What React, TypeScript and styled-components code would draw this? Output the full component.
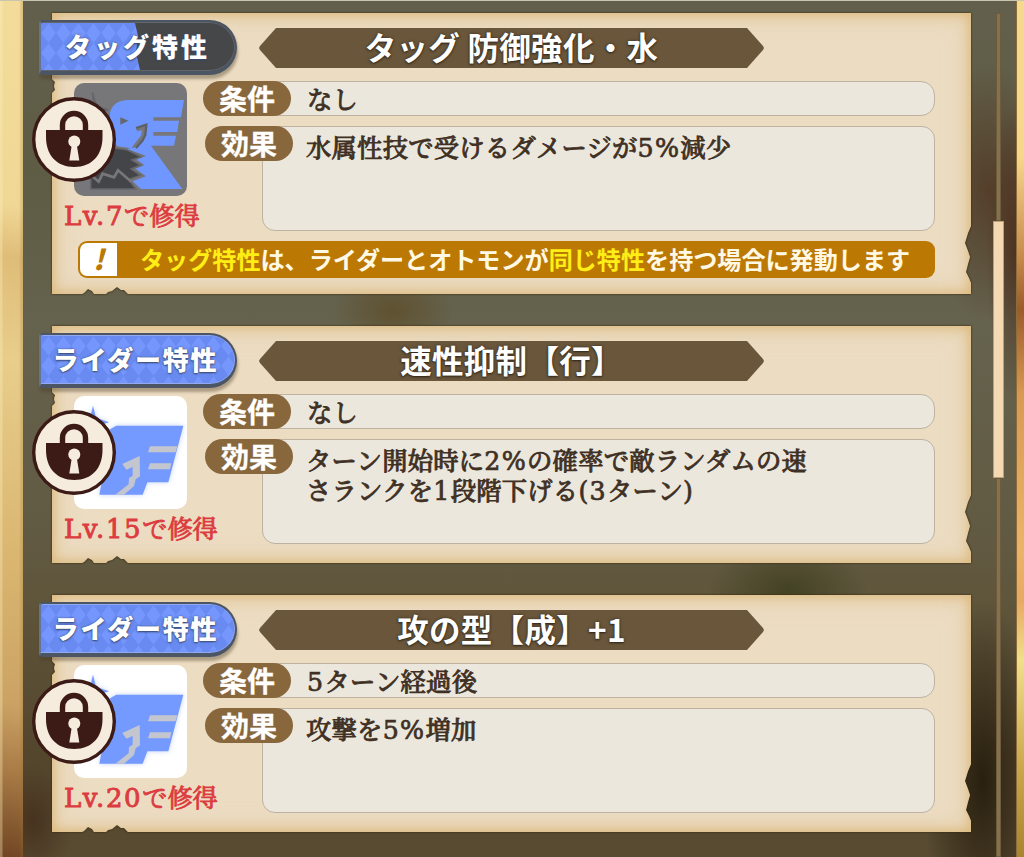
import type React from "react"
import styled, { createGlobalStyle } from "styled-components"

const gothic = `"Noto Sans CJK JP", "Noto Sans", sans-serif`
const mincho = `"Liberation Serif", "Noto Serif CJK JP", "Noto Sans CJK JP", serif`
const slab = `"DejaVu Serif", "Liberation Serif", serif`

const GlobalStyle = createGlobalStyle`
  * {
    box-sizing: border-box;
  }
  body {
    margin: 0;
    overflow: hidden;
    background: #5f553d;
  }
`

const Screen = styled.div`
  display: grid;
  grid-template-columns: 23px 1fr 8px;
  width: 1024px;
  height: 857px;
  overflow: hidden;
  border-top: 1px solid #c9c6b0;
`

const LeftFrame = styled.div`
  background:
    linear-gradient(90deg, rgba(255, 240, 190, 0.35) 0 2px, transparent 3px 19px, rgba(150, 110, 50, 0.25) 22px),
    linear-gradient(190deg, #f3dc9b 0%, #f0d795 24%, #dfbd78 30%, #e8cd8b 42%, #d9b56f 66%, #cba264 82%, #a87a46 90%, #704522 100%);
`

const RightFrame = styled.div`
  border-left: 1px solid #8b6c3a;
  background: linear-gradient(180deg, #f5d98d 0%, #f7d88b 18%, #c68a4a 30%, #9c5b2b 36%, #d89a52 46%, #eab468 64%, #e8a962 70%, #efe08a 77%, #c9a54a 90%, #a8842f 100%);
`

const Panel = styled.main`
  display: flex;
  padding: 12px 12px 0 29px;
  background:
    radial-gradient(ellipse 60px 130px at 965px 190px, rgba(75, 38, 20, 0.55), transparent),
    radial-gradient(ellipse 30px 150px at 993px 250px, rgba(65, 25, 12, 0.6), transparent),
    radial-gradient(ellipse 80px 50px at 765px 590px, rgba(52, 55, 22, 0.65), transparent),
    radial-gradient(ellipse 60px 180px at 960px 780px, rgba(30, 22, 8, 0.8), transparent),
    radial-gradient(ellipse 60px 40px at 370px 310px, rgba(90, 65, 20, 0.5), transparent),
    radial-gradient(ellipse 40px 60px at 10px 820px, rgba(60, 35, 18, 0.6), transparent),
    linear-gradient(180deg, #62604c 0%, #5f5c45 20%, #65624d 38%, #625b44 60%, #5f563c 69%, #54462d 88%, #594b32 100%);
`

const List = styled.div`
  display: flex;
  flex-direction: column;
  gap: 32px;
  width: 919px;
`

const CardBox = styled.section<{ $height: number }>`
  position: relative;
  height: ${(props) => props.$height}px;
  padding: 7px 0 0;
`

const PaperShade = styled.div`
  position: absolute;
  inset: 0;
  filter: drop-shadow(0 0 0.7px #35250d) drop-shadow(0 0 1px #35250d);
`

/* torn edges are measured from the bottom so they hold for both card heights */
const Paper = styled.div`
  height: 100%;
  background: #ecdcc2;
  box-shadow: inset 0 0 12px 2px rgba(214, 170, 95, 0.65), inset 0 0 28px rgba(222, 184, 125, 0.35);
  clip-path: polygon(
    0 0, 100% 0, 100% calc(100% - 68px),
    calc(100% - 3px) calc(100% - 61px), calc(100% - 6px) calc(100% - 51px),
    calc(100% - 3px) calc(100% - 43px), calc(100% - 1px) calc(100% - 37px),
    calc(100% - 3px) calc(100% - 30px), calc(100% - 5px) calc(100% - 22px),
    calc(100% - 2px) calc(100% - 16px), 100% calc(100% - 11px), 100% 100%,
    76px 100%, 72px calc(100% - 4px), 69px calc(100% - 4px), 65px calc(100% - 7px),
    60px calc(100% - 3px), 56px calc(100% - 2px), 54px 100%,
    42px 100%, 40px calc(100% - 3px), 36px calc(100% - 5px), 32px calc(100% - 1px), 30px 100%,
    0 100%, 0 80px, 3px 77px, 2px 73px, 3px 69px, 0 66px
  );
`

const Header = styled.header`
  position: relative;
  display: flex;
  height: 61px;
  margin-left: -13px;
`

const Badge = styled.div<{ $tag?: boolean }>`
  position: relative;
  width: 198px;
  height: 55px;
  padding: 0 ${(props) => (props.$tag ? "1px" : "5px")} 2px 0;
  display: flex;
  align-items: center;
  justify-content: center;
  border: 2px solid #4c5563;
  border-bottom-width: 4px;
  border-left-color: #667493;
  border-radius: 4px 28px 28px 4px;
  background: ${(props) => (props.$tag ? "#464748" : "#7193fb")};
  box-shadow: inset 0 0 0 1px ${(props) => (props.$tag ? "#62666b" : "#91a9f1")}, 1px 4px 3px rgba(75, 60, 38, 0.4);
  overflow: hidden;
`

const Checker = styled.div<{ $tag?: boolean }>`
  position: absolute;
  inset: 1px 1px 1px 0;
  width: ${(props) => (props.$tag ? "99px" : "auto")};
  border-radius: 1px ${(props) => (props.$tag ? "0 0" : "25px 25px")} 1px;
  background-color: #7496fd;
  background-image:
    linear-gradient(53deg, #698bf1 25%, transparent 27% 73%, #698bf1 75%),
    linear-gradient(-53deg, #698bf1 25%, transparent 27% 73%, #698bf1 75%);
  background-size: 15px 20px;
  clip-path: ${(props) => (props.$tag ? "polygon(0 0, 94px 0, 97px 13px, 95px 30px, 99px 100%, 0 100%)" : "none")};
`

const BadgeText = styled.span<{ $tag?: boolean }>`
  position: relative;
  font: 900 26px/40px ${gothic};
  letter-spacing: ${(props) => (props.$tag ? 3 : 1.8)}px;
  color: #fff;
  white-space: nowrap;
  text-shadow: 0 1px 2px #36486f, 0 0 2px #45547c;
`

const Ribbon = styled.h2`
  width: 505px;
  height: 40px;
  margin: 8px 0 0 22px;
  background: #69563b;
  clip-path: polygon(17px 0, calc(100% - 17px) 0, calc(100% - 1px) 18px, 100% 50%, calc(100% - 1px) 22px, calc(100% - 17px) 100%, 17px 100%, 1px 22px, 0 50%, 1px 18px);
  font: 700 31.5px/36px ${gothic};
  letter-spacing: 0.3px;
  color: #fff;
  text-align: center;
  white-space: pre;
  text-shadow: 0 1px 2px #30271b, 0 0 3px #3d3120;
`

const Body = styled.div`
  position: relative;
  display: flex;
  height: 150px;
`

const Side = styled.div`
  width: 151px;
  padding: 2px 0 0 22px;
`

const Tile = styled.div<{ $tag?: boolean }>`
  position: relative;
  width: 113px;
  height: 113px;
  border-radius: 10px;
  background: ${(props) => (props.$tag ? "#77777a" : "#fff")};

  > svg {
    display: block;
  }
`

const Lock = styled.div`
  position: absolute;
  left: -42px;
  top: 14px;
  width: 84px;
  height: 86px;
`

const Level = styled.p`
  margin: 3px 0 0 -10px;
  font: 400 25.2px/34px ${mincho};
  color: #dc3c40;
  white-space: nowrap;
  -webkit-text-stroke: 0.9px #dc3c40;
`

const LevelNumber = styled.span`
  font-family: ${slab};
  font-size: 26px;
  letter-spacing: 1.6px;
`

const Fields = styled.div`
  display: flex;
  flex-direction: column;
  gap: 10px;
  width: 732px;
`

const FieldRow = styled.div<{ $tall?: boolean }>`
  display: flex;
  height: ${(props) => (props.$tall ? 105 : 35)}px;
  padding-left: ${(props) => (props.$tall ? 2 : 0)}px;
`

const Label = styled.span`
  position: relative;
  z-index: 1;
  width: 88px;
  height: 35px;
  border-radius: 18px;
  background: #88673d;
  font: 700 28px/34px ${gothic};
  color: #fff;
  text-align: center;
  -webkit-text-stroke: 0.3px #fff;
`

const Value = styled.div<{ $tall?: boolean }>`
  flex: 1;
  margin-left: -31px;
  padding: ${(props) => (props.$tall ? "6px 0 0 43px" : "3px 0 0 46px")};
  border: 1.5px solid #beb3a0;
  border-radius: ${(props) => (props.$tall ? 13 : 14)}px;
  background: #ebe7dc;
  font: 500 25.3px/30px ${mincho};
  letter-spacing: 0.25px;
  color: #403024;
  white-space: pre-line;
  -webkit-text-stroke: 0.8px #403024;
`

const Digits = styled.span`
  font-family: ${slab};
  font-weight: 400;
  line-height: 20px;
  letter-spacing: 1.3px;
  -webkit-text-stroke: 0.7px #403024;
`

const Notice = styled.div`
  position: relative;
  display: flex;
  width: 857px;
  height: 37px;
  margin: 10px 0 0 26px;
  padding: 2px;
  border-radius: 9px;
  background: #bb7903;
`

const NoticeMark = styled.span`
  width: 37px;
  height: 33px;
  border-radius: 7px 0 0 7px;
  background: #fff;
  font: italic 900 28px/31px ${gothic};
  color: #bb7903;
  text-align: center;
`

const NoticeText = styled.p`
  margin: 0 0 0 23px;
  font: 700 24.1px/32px ${gothic};
  color: #fff8e4;
  white-space: nowrap;

  em {
    font-style: normal;
    color: #ffee16;
  }
`

const Rail = styled.div`
  display: flex;
  flex-direction: column;
  align-items: center;
  width: 12px;
  margin-left: 21px;
`

const Track = styled.div<{ $height?: number }>`
  width: 5px;
  ${(props) => (props.$height ? `height: ${props.$height}px;` : "flex: 1;")}
  border: 1px solid #6d5b3e;
  background: #86714f;
`

const Thumb = styled.div`
  width: 11px;
  height: 257px;
  border: 1px solid #bba17b;
  background: #f5d9b3;
`

const LockIcon = () => (
  <svg width="84" height="86" viewBox="0 0 84 86">
    <ellipse cx="42" cy="42.500" rx="40.3" ry="40.800" fill="#f6ecdd" stroke="#3c1b17" strokeWidth="3.4" />
    <path d="M30.500 35 V28 A11.500 11.500 0 0 1 53.500 28 V35" fill="none" stroke="#3c1b17" strokeWidth="5.4" />
    <path d="M14 33 H70.500 V40 C70.500 58 60 70 42.200 70 C24.500 70 14 58 14 40 Z" fill="#3c1b17" />
    <circle cx="42.300" cy="44.500" r="6" fill="#f6ecdd" />
    <path d="M39.800 48 H44.800 L47.300 63.500 H37.300 Z" fill="#f6ecdd" />
  </svg>
)

/* viewBox is three units per pixel in both emblems */
const TagEmblem = () => (
  <svg width="113" height="113" viewBox="0 0 339 339">
    <path
      d="M55 28 L68 70 L100 80 L65 110 Z M50 240 L120 195 L160 200 L202 222 L174 231 L200 247 L172 258 L200 277 L164 290 L186 318 L50 318 Z"
      fill="#444548"
      stroke="#66676b"
      strokeWidth="5"
    />
    <path d="M48 274 L74 296 L86 272 L120 283 L132 262 L172 296" fill="none" stroke="#77777a" strokeWidth="8" />
    <path
      d="M108 88 C117 61 136 51 164 51 H330 L321 103 H238 V113 H315 L310 147 H238 V158 H306 L300 188 H231 L325 318 H201 L176 295 L216 280 L185 257 L211 246 L188 230 L216 218 L159 198 L184 193 L206 170 L213 155 L215 126 L186 137 L190 145 L204 142 L201 158 L184 179 L172 196 L130 190 L108 160 Z"
      fill="#6f97ff"
    />
    <path d="M186 135 L217 125 L214 156 L206 172 L186 195" fill="none" stroke="#5c6068" strokeWidth="7" />
    <path d="M139 103 L163 113 L139 125 Z" fill="#66676b" />
  </svg>
)

const RiderEmblem = () => (
  <svg width="113" height="113" viewBox="0 0 339 339">
    <g style={{ filter: "drop-shadow(0 0 8px #c3d1f5)" }}>
      <path d="M57 29 L66 65 L105 79 L69 91 L59 128 L48 91 L18 80 L48 67 Z" fill="#749aff" />
      <path d="M127 89 H328 L283 259 H220 L206 296 H76 L85 250 L118 175 L108 100 Z" fill="#749aff" />
    </g>
    <path d="M228 151 H310 L305 169 H222 Z M228 202 H292 L288 220 H222 Z" fill="#c3c6ce" />
    <path d="M145 204 L197 180 L198 241 L185 250 L180 270 L150 296 H124 L164 265 L165 246 L176 239 V213 L157 221 Z" fill="#c3c6ce" />
  </svg>
)

interface Trait {
  id: number
  tag?: boolean
  kind: string
  title: string
  level: number
  condition: string
  effect: string
}

const traits: Trait[] = [
  { id: 1, tag: true, kind: "タッグ特性", title: "タッグ 防御強化・水", level: 7, condition: "なし", effect: "水属性技で受けるダメージが5%減少" },
  {
    id: 2,
    kind: "ライダー特性",
    title: "速性抑制【行】",
    level: 15,
    condition: "なし",
    effect: "ターン開始時に2%の確率で敵ランダムの速\nさランクを1段階下げる(3ターン)",
  },
  { id: 3, kind: "ライダー特性", title: "攻の型【成】+1", level: 20, condition: "5ターン経過後", effect: "攻撃を5%増加" },
]

// digits and brackets use a wider latin face than the kana around them
const renderText = (text: string) =>
  text.split(/([0-9%()]+)/).map((part, i) => (i % 2 ? <Digits key={i}>{part}</Digits> : part))

const TraitCard: React.FC<{ trait: Trait }> = ({ trait }) => (
  <CardBox $height={trait.tag ? 281 : 237}>
    <PaperShade>
      <Paper />
    </PaperShade>
    <Header>
      <Badge $tag={trait.tag}>
        <Checker $tag={trait.tag} />
        <BadgeText $tag={trait.tag}>{trait.kind}</BadgeText>
      </Badge>
      <Ribbon>{trait.title}</Ribbon>
    </Header>
    <Body>
      <Side>
        <Tile $tag={trait.tag}>
          {trait.tag ? <TagEmblem /> : <RiderEmblem />}
          <Lock>
            <LockIcon />
          </Lock>
        </Tile>
        <Level>
          <LevelNumber>Lv.{trait.level}</LevelNumber>
          で修得
        </Level>
      </Side>
      <Fields>
        <FieldRow>
          <Label>条件</Label>
          <Value>{renderText(trait.condition)}</Value>
        </FieldRow>
        <FieldRow $tall>
          <Label>効果</Label>
          <Value $tall>{renderText(trait.effect)}</Value>
        </FieldRow>
      </Fields>
    </Body>
    {trait.tag && (
      <Notice>
        <NoticeMark>!</NoticeMark>
        <NoticeText>
          <em>タッグ特性</em>は、ライダーとオトモンが<em>同じ特性</em>を持つ場合に発動します
        </NoticeText>
      </Notice>
    )}
  </CardBox>
)

const App: React.FC = () => {
  return (
    <>
      <GlobalStyle />
      <Screen>
        <LeftFrame />
        <Panel>
          <List>
            {traits.map((trait) => (
              <TraitCard key={trait.id} trait={trait} />
            ))}
          </List>
          <Rail>
            <Track $height={208} />
            <Thumb />
            <Track />
          </Rail>
        </Panel>
        <RightFrame />
      </Screen>
    </>
  )
}

export default App
